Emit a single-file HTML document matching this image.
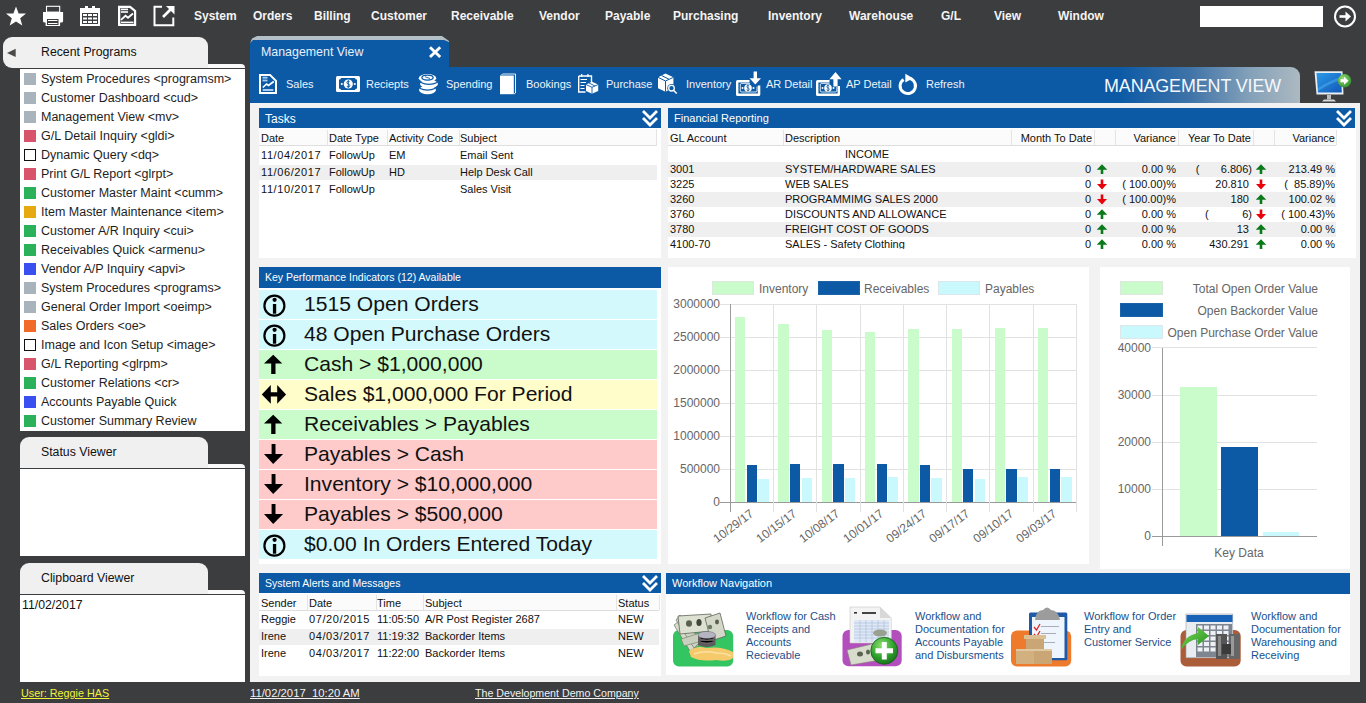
<!DOCTYPE html>
<html><head><meta charset="utf-8">
<style>
*{box-sizing:border-box}
html,body{margin:0;padding:0}
body{width:1366px;height:703px;overflow:hidden;background:#3c3d3f;position:relative;font-family:"Liberation Sans",sans-serif;color:#111}
.a{position:absolute}
.t{position:absolute;white-space:nowrap;line-height:1}
.menu{position:absolute;top:9px;color:#f4f4f4;font-weight:bold;font-size:12px;line-height:14px;white-space:nowrap}
.tab{position:absolute;background:#f0f0f0;border-radius:9px 9px 0 0}
.strip{position:absolute;background:#fafafa;border-radius:0 4px 0 0}
.dline{position:absolute;background:#3c3d3f;height:1px}
.wbox{position:absolute;background:#fff}
.li{position:absolute;left:41px;font-size:12.5px;line-height:14px;white-space:nowrap;color:#1e1e1e}
.sq{position:absolute;left:24px;width:12px;height:12px}
.hdr{position:absolute;background:#0c5aa6;height:20px;color:#fff;font-size:11px;line-height:20px;white-space:nowrap}
.tb{position:absolute;top:78px;color:#eef4fa;font-size:11px;line-height:12px;white-space:nowrap}
.cell{position:absolute;font-size:11px;line-height:13px;white-space:nowrap;color:#111}
.kr{position:absolute;left:259px;width:398px;height:30px}
.kt{position:absolute;left:304px;font-size:21.1px;line-height:24px;white-space:nowrap;color:#111}
.ax{position:absolute;font-size:12px;line-height:14px;color:#666;white-space:nowrap}
.wf{position:absolute;font-size:11px;line-height:13px;color:#1b4f8c;white-space:nowrap}
.ft{position:absolute;top:687px;font-size:10.8px;line-height:12px;white-space:nowrap;text-decoration:underline}
</style></head><body>

<!-- ===== TOP MENU ===== -->
<svg class="a" style="left:0;top:0" width="190" height="32" viewBox="0 0 190 32">
  <!-- star -->
  <polygon fill="#fff" points="16,6.5 18.6,13.4 26,13.6 20.2,18.3 22.3,25.6 16,21.4 9.7,25.6 11.8,18.3 6,13.6 13.4,13.4"/>
  <!-- printer -->
  <rect x="46.5" y="6.3" width="13.2" height="5.8" fill="none" stroke="#fff" stroke-width="1.1"/>
  <path d="M43,12 H63.1 V21 Q63.1,22.6 61.5,22.6 H44.6 Q43,22.6 43,21 Z" fill="#fff"/>
  <rect x="45.6" y="18.4" width="14.5" height="7.6" fill="#fff"/>
  <rect x="47" y="19" width="11.5" height="6" fill="#3c3d3f"/>
  <rect x="48" y="20" width="9.5" height="1" fill="#fff"/>
  <rect x="48" y="23" width="9.5" height="1" fill="#fff"/>
  <!-- calendar -->
  <rect x="80" y="8" width="20" height="18" fill="#fff"/>
  <rect x="85" y="6" width="3" height="2.5" fill="#fff"/><rect x="92" y="6" width="3" height="2.5" fill="#fff"/>
  <rect x="82" y="13" width="16" height="11" fill="#3c3d3f"/>
  <g fill="#fff">
  <rect x="83" y="14" width="4" height="2"/><rect x="88" y="14" width="4" height="2"/><rect x="93" y="14" width="4" height="2"/>
  <rect x="83" y="17.5" width="4" height="2"/><rect x="88" y="17.5" width="4" height="2"/><rect x="93" y="17.5" width="4" height="2"/>
  <rect x="83" y="21" width="4" height="2"/><rect x="88" y="21" width="4" height="2"/><rect x="93" y="21" width="4" height="2"/>
  </g>
  <!-- report -->
  <path d="M118,5.8 H130.5 L136.2,10.6 V26 H118 Z M120.3,8 V23.8 H134 V11.6 L129.7,8 Z" fill="#fff" fill-rule="evenodd"/>
  <rect x="121" y="8.6" width="7" height="1.6" fill="#fff"/><rect x="121" y="11.2" width="7" height="1.6" fill="#fff"/>
    <polyline points="121,19.8 125.5,15.8 128,17.8 133,13.5" fill="none" stroke="#fff" stroke-width="1.8"/>
  <rect x="121" y="21.6" width="12.5" height="1.4" fill="#fff"/>
  <!-- export -->
  <path d="M162,6.8 H154.5 V25.2 H173.3 V17.5" fill="none" stroke="#fff" stroke-width="2"/>
  <path d="M163,17 L171,9" stroke="#fff" stroke-width="2.6"/>
  <polygon points="166,6 174.5,6 174.5,14.5" fill="#fff"/>
</svg>
<div class="menu" style="left:194px">System</div>
<div class="menu" style="left:253px">Orders</div>
<div class="menu" style="left:314px">Billing</div>
<div class="menu" style="left:371px">Customer</div>
<div class="menu" style="left:451px">Receivable</div>
<div class="menu" style="left:539px">Vendor</div>
<div class="menu" style="left:605px">Payable</div>
<div class="menu" style="left:673px">Purchasing</div>
<div class="menu" style="left:768px">Inventory</div>
<div class="menu" style="left:849px">Warehouse</div>
<div class="menu" style="left:941px">G/L</div>
<div class="menu" style="left:994px">View</div>
<div class="menu" style="left:1058px">Window</div>
<div class="a" style="left:1200px;top:6px;width:123px;height:21px;background:#fff"></div>
<svg class="a" style="left:1332px;top:4px" width="26" height="26" viewBox="0 0 26 26">
  <circle cx="13" cy="12.5" r="10" fill="none" stroke="#fff" stroke-width="2"/>
  <path d="M7.5,12.5 H16" stroke="#fff" stroke-width="2.6"/>
  <polygon points="13.5,7.5 19,12.5 13.5,17.5" fill="#fff"/>
</svg>

<!-- ===== LEFT SIDEBAR ===== -->
<div class="tab" style="left:3px;top:37px;width:205px;height:31px;border-radius:9px 9px 0 9px"></div>
<svg class="a" style="left:6px;top:47px" width="12" height="12"><polygon points="1,6 9.7,1.8 9.7,10" fill="#4a4a4a"/></svg>
<div class="t" style="left:41px;top:45px;font-size:12.3px;line-height:14px">Recent Programs</div>
<div class="strip" style="left:208px;top:64px;width:37px;height:4px"></div>
<div class="dline" style="left:20px;top:68px;width:225px"></div>
<div class="wbox" style="left:20px;top:69px;width:225px;height:362px"></div>

<div id="list"><div class="sq" style="top:73px;background:#a8b3bc"></div>
<div class="li" style="top:72px">System Procedures &lt;programsm&gt;</div>
<div class="sq" style="top:92px;background:#a8b3bc"></div>
<div class="li" style="top:91px">Customer Dashboard &lt;cud&gt;</div>
<div class="sq" style="top:111px;background:#a8b3bc"></div>
<div class="li" style="top:110px">Management View &lt;mv&gt;</div>
<div class="sq" style="top:130px;background:#d8546c"></div>
<div class="li" style="top:129px">G/L Detail Inquiry &lt;gldi&gt;</div>
<div class="sq" style="top:149px;border:1.5px solid #111;background:#fff"></div>
<div class="li" style="top:148px">Dynamic Query &lt;dq&gt;</div>
<div class="sq" style="top:168px;background:#d8546c"></div>
<div class="li" style="top:167px">Print G/L Report &lt;glrpt&gt;</div>
<div class="sq" style="top:187px;background:#2bb15a"></div>
<div class="li" style="top:186px">Customer Master Maint &lt;cumm&gt;</div>
<div class="sq" style="top:206px;background:#e6a910"></div>
<div class="li" style="top:205px">Item Master Maintenance &lt;item&gt;</div>
<div class="sq" style="top:225px;background:#2bb15a"></div>
<div class="li" style="top:224px">Customer A/R Inquiry &lt;cui&gt;</div>
<div class="sq" style="top:244px;background:#2bb15a"></div>
<div class="li" style="top:243px">Receivables Quick &lt;armenu&gt;</div>
<div class="sq" style="top:263px;background:#3a4ff0"></div>
<div class="li" style="top:262px">Vendor A/P Inquiry &lt;apvi&gt;</div>
<div class="sq" style="top:282px;background:#a8b3bc"></div>
<div class="li" style="top:281px">System Procedures &lt;programs&gt;</div>
<div class="sq" style="top:301px;background:#a8b3bc"></div>
<div class="li" style="top:300px">General Order Import &lt;oeimp&gt;</div>
<div class="sq" style="top:320px;background:#f16a27"></div>
<div class="li" style="top:319px">Sales Orders &lt;oe&gt;</div>
<div class="sq" style="top:339px;border:1.5px solid #111;background:#fff"></div>
<div class="li" style="top:338px">Image and Icon Setup &lt;image&gt;</div>
<div class="sq" style="top:358px;background:#d8546c"></div>
<div class="li" style="top:357px">G/L Reporting &lt;glrpm&gt;</div>
<div class="sq" style="top:377px;background:#2bb15a"></div>
<div class="li" style="top:376px">Customer Relations &lt;cr&gt;</div>
<div class="sq" style="top:396px;background:#3a4ff0"></div>
<div class="li" style="top:395px">Accounts Payable Quick</div>
<div class="sq" style="top:415px;background:#2bb15a"></div>
<div class="li" style="top:414px">Customer Summary Review</div></div><!--/list-->

<div class="tab" style="left:20px;top:437px;width:188px;height:31px"></div>
<div class="t" style="left:41px;top:445px;font-size:12.3px;line-height:14px">Status Viewer</div>
<div class="strip" style="left:208px;top:464px;width:37px;height:4px"></div>
<div class="dline" style="left:20px;top:468px;width:225px"></div>
<div class="wbox" style="left:20px;top:469px;width:225px;height:87px"></div>

<div class="tab" style="left:20px;top:563px;width:188px;height:31px"></div>
<div class="t" style="left:41px;top:571px;font-size:12.3px;line-height:14px">Clipboard Viewer</div>
<div class="strip" style="left:208px;top:590px;width:37px;height:4px"></div>
<div class="dline" style="left:20px;top:594px;width:225px"></div>
<div class="wbox" style="left:20px;top:595px;width:225px;height:87px"></div>
<div class="t" style="left:22px;top:598px;font-size:12.3px;line-height:14px">11/02/2017</div>

<div class="ft" style="left:21px;color:#f2f23a">User: Reggie HAS</div>
<div class="ft" style="left:250px;color:#f2f2f2;font-size:11.3px">11/02/2017&nbsp; 10:20 AM</div>
<div class="ft" style="left:475px;color:#f2f2f2;font-size:10.65px">The Development Demo Company</div>

<!-- MAIN -->
<div id="main"><!-- tab -->
<div class="a" style="left:250px;top:36px;width:199px;height:34px;background:#b4c0c8;clip-path:polygon(0 7px,2px 2.5px,7px 0,192px 0,199px 5px,199px 100%,0 100%);border-radius:7px 0 0 0"></div>
<div class="a" style="left:250px;top:40px;width:199px;height:30px;background:#0c5aa6;clip-path:polygon(0 3px,3px 0,194px 0,199px 2px,199px 100%,0 100%)"></div>
<div class="t" style="left:261px;top:45px;font-size:12.4px;line-height:14px;color:#e6f0fa">Management View</div>
<svg class="a" style="left:427px;top:44px" width="16" height="16" viewBox="0 0 16 16"><path d="M3,3.3 L13.2,13 M13.2,3.3 L3,13" stroke="#fff" stroke-width="2.9"/></svg>
<!-- toolbar -->
<div class="a" style="left:250px;top:67px;width:1050px;height:36px;border-radius:0 9px 0 0;background:linear-gradient(to right,#0c5aa6 0px,#0c5aa6 870px,#3f73a8 940px,#84a1b9 1000px,#acb9c1 1050px)"></div>
<div class="t" style="left:1104px;top:76px;font-size:17.9px;letter-spacing:-0.1px;line-height:20px;color:#f4f8fc">MANAGEMENT VIEW</div>
<!-- content bg -->
<div class="a" style="left:250px;top:103px;width:1110px;height:579px;background:#f2f2f2"></div>

<!-- Tasks -->
<div class="hdr" style="left:259px;top:108px;width:402px"><span style="position:absolute;left:6px;top:1px;font-size:12px;letter-spacing:0px">Tasks</span></div>
<div class="wbox" style="left:259px;top:128px;width:402px;height:130px"></div>
<!-- Financial -->
<div class="hdr" style="left:668px;top:108px;width:687px"><span style="position:absolute;left:6px;top:0">Financial Reporting</span></div>
<div class="wbox" style="left:668px;top:128px;width:688px;height:130px"></div>
<!-- KPI -->
<div class="hdr" style="left:259px;top:267px;width:402px;height:21px;line-height:21px"><span style="position:absolute;left:6px;top:0;font-size:10.5px">Key Performance Indicators (12) Available</span></div>
<div class="wbox" style="left:259px;top:288px;width:402px;height:276px"></div>
<!-- charts -->
<div class="wbox" style="left:668px;top:267px;width:421px;height:297px"></div>
<div class="wbox" style="left:1100px;top:267px;width:250px;height:302px"></div>
<!-- alerts -->
<div class="hdr" style="left:259px;top:573px;width:402px"><span style="position:absolute;left:6px;top:0;font-size:10.5px">System Alerts and Messages</span></div>
<div class="wbox" style="left:259px;top:593px;width:402px;height:83px"></div>
<!-- workflow -->
<div class="hdr" style="left:666px;top:573px;width:684px;height:21px;line-height:21px"><span style="position:absolute;left:6px;top:0">Workflow Navigation</span></div>
<div class="wbox" style="left:666px;top:594px;width:684px;height:81px"></div>
</div><!--/main-->
<div id="tables"><div class="a" style="left:259px;top:129px;width:398px;height:17px;background:#fbfbfb;border-bottom:1px solid #dedede"></div>
<div class="a" style="left:327px;top:130px;width:1px;height:15px;background:#e4e4e4"></div>
<div class="a" style="left:387px;top:130px;width:1px;height:15px;background:#e4e4e4"></div>
<div class="a" style="left:459px;top:130px;width:1px;height:15px;background:#e4e4e4"></div>
<div class="a" style="left:656px;top:129px;width:1px;height:17px;background:#e4e4e4"></div>
<div class="cell" style="left:261px;top:131.5px;font-size:11px;color:#111;">Date</div>
<div class="cell" style="left:329px;top:131.5px;font-size:11px;color:#111;">Date Type</div>
<div class="cell" style="left:389px;top:131.5px;font-size:11px;color:#111;">Activity Code</div>
<div class="cell" style="left:460px;top:131.5px;font-size:11px;color:#111;">Subject</div>
<div class="a" style="left:259px;top:165px;width:398px;height:15px;background:#efefef"></div>
<div class="cell" style="left:261px;top:148.5px;font-size:11px;color:#111;letter-spacing:0.6px">11/04/2017</div>
<div class="cell" style="left:329px;top:148.5px;font-size:11px;color:#111;">FollowUp</div>
<div class="cell" style="left:389px;top:148.5px;font-size:11px;color:#111;">EM</div>
<div class="cell" style="left:460px;top:148.5px;font-size:11px;color:#111;">Email Sent</div>
<div class="cell" style="left:261px;top:165.5px;font-size:11px;color:#111;letter-spacing:0.6px">11/06/2017</div>
<div class="cell" style="left:329px;top:165.5px;font-size:11px;color:#111;">FollowUp</div>
<div class="cell" style="left:389px;top:165.5px;font-size:11px;color:#111;">HD</div>
<div class="cell" style="left:460px;top:165.5px;font-size:11px;color:#111;">Help Desk Call</div>
<div class="cell" style="left:261px;top:182.5px;font-size:11px;color:#111;letter-spacing:0.6px">11/10/2017</div>
<div class="cell" style="left:329px;top:182.5px;font-size:11px;color:#111;">FollowUp</div>
<div class="cell" style="left:460px;top:182.5px;font-size:11px;color:#111;">Sales Visit</div>
<div class="a" style="left:668px;top:129px;width:668px;height:17px;background:#fbfbfb;border-bottom:1px solid #dedede"></div>
<div class="a" style="left:783px;top:130px;width:1px;height:15px;background:#e4e4e4"></div>
<div class="a" style="left:1011px;top:130px;width:1px;height:15px;background:#e4e4e4"></div>
<div class="a" style="left:1094px;top:130px;width:1px;height:15px;background:#e4e4e4"></div>
<div class="a" style="left:1115px;top:130px;width:1px;height:15px;background:#e4e4e4"></div>
<div class="a" style="left:1178px;top:130px;width:1px;height:15px;background:#e4e4e4"></div>
<div class="a" style="left:1253px;top:130px;width:1px;height:15px;background:#e4e4e4"></div>
<div class="a" style="left:1274px;top:130px;width:1px;height:15px;background:#e4e4e4"></div>
<div class="a" style="left:1336px;top:130px;width:1px;height:15px;background:#e4e4e4"></div>
<div class="cell" style="left:670px;top:131.5px;font-size:11px;color:#111;">GL Account</div>
<div class="cell" style="left:785px;top:131.5px;font-size:11px;color:#111;">Description</div>
<div class="cell" style="left:892px;width:200px;text-align:right;top:131.5px;font-size:11px;color:#111;">Month To Date</div>
<div class="cell" style="left:976px;width:200px;text-align:right;top:131.5px;font-size:11px;color:#111;">Variance</div>
<div class="cell" style="left:1051px;width:200px;text-align:right;top:131.5px;font-size:11px;color:#111;">Year To Date</div>
<div class="cell" style="left:1135px;width:200px;text-align:right;top:131.5px;font-size:11px;color:#111;">Variance</div>
<div class="a" style="left:668px;top:162px;width:668px;height:15px;background:#efefef"></div>
<div class="a" style="left:668px;top:192px;width:668px;height:15px;background:#efefef"></div>
<div class="a" style="left:668px;top:222px;width:668px;height:15px;background:#efefef"></div>
<div class="cell" style="left:845px;top:148.2px;font-size:11px;color:#111;">INCOME</div>
<div class="cell" style="left:670px;top:163.2px;font-size:11px;color:#111;">3001</div>
<div class="cell" style="left:785px;top:163.2px;font-size:11px;color:#111;">SYSTEM/HARDWARE SALES</div>
<div class="cell" style="left:891px;width:200px;text-align:right;top:163.2px;font-size:11px;color:#111;">0</div>
<div class="a" style="left:1096px;top:164px;width:12px;height:11px;line-height:0"><svg width="12" height="11" viewBox="0 0 12 11"><path d="M6,0.3 L11.3,5.8 H7.3 V10 H4.7 V5.8 H0.7 Z" fill="#0b7a1b"/></svg></div>
<div class="cell" style="left:976px;width:200px;text-align:right;top:163.2px;font-size:11px;color:#111;">0.00 %</div>
<div class="cell" style="left:1052px;width:200px;text-align:right;top:163.2px;font-size:11px;color:#111;">(&nbsp;&nbsp;&nbsp;&nbsp;&nbsp;&nbsp; 6.806)</div>
<div class="a" style="left:1255px;top:164px;width:12px;height:11px;line-height:0"><svg width="12" height="11" viewBox="0 0 12 11"><path d="M6,0.3 L11.3,5.8 H7.3 V10 H4.7 V5.8 H0.7 Z" fill="#0b7a1b"/></svg></div>
<div class="cell" style="left:1135px;width:200px;text-align:right;top:163.2px;font-size:11px;color:#111;">213.49 %</div>
<div class="cell" style="left:670px;top:178.2px;font-size:11px;color:#111;">3225</div>
<div class="cell" style="left:785px;top:178.2px;font-size:11px;color:#111;">WEB SALES</div>
<div class="cell" style="left:891px;width:200px;text-align:right;top:178.2px;font-size:11px;color:#111;">0</div>
<div class="a" style="left:1096px;top:179px;width:12px;height:11px;line-height:0"><svg width="12" height="11" viewBox="0 0 12 11"><path d="M6,10.5 L11,5 H7.3 V0.5 H4.7 V5 H1 Z" fill="#e8000b"/></svg></div>
<div class="cell" style="left:976px;width:200px;text-align:right;top:178.2px;font-size:11px;color:#111;">( 100.00)%</div>
<div class="cell" style="left:1052px;width:200px;text-align:right;top:178.2px;font-size:11px;color:#111;">20.810&nbsp;</div>
<div class="a" style="left:1255px;top:179px;width:12px;height:11px;line-height:0"><svg width="12" height="11" viewBox="0 0 12 11"><path d="M6,10.5 L11,5 H7.3 V0.5 H4.7 V5 H1 Z" fill="#e8000b"/></svg></div>
<div class="cell" style="left:1135px;width:200px;text-align:right;top:178.2px;font-size:11px;color:#111;">(&nbsp; 85.89)%</div>
<div class="cell" style="left:670px;top:193.2px;font-size:11px;color:#111;">3260</div>
<div class="cell" style="left:785px;top:193.2px;font-size:11px;color:#111;">PROGRAMMIMG SALES 2000</div>
<div class="cell" style="left:891px;width:200px;text-align:right;top:193.2px;font-size:11px;color:#111;">0</div>
<div class="a" style="left:1096px;top:194px;width:12px;height:11px;line-height:0"><svg width="12" height="11" viewBox="0 0 12 11"><path d="M6,10.5 L11,5 H7.3 V0.5 H4.7 V5 H1 Z" fill="#e8000b"/></svg></div>
<div class="cell" style="left:976px;width:200px;text-align:right;top:193.2px;font-size:11px;color:#111;">( 100.00)%</div>
<div class="cell" style="left:1052px;width:200px;text-align:right;top:193.2px;font-size:11px;color:#111;">180&nbsp;</div>
<div class="a" style="left:1255px;top:194px;width:12px;height:11px;line-height:0"><svg width="12" height="11" viewBox="0 0 12 11"><path d="M6,0.3 L11.3,5.8 H7.3 V10 H4.7 V5.8 H0.7 Z" fill="#0b7a1b"/></svg></div>
<div class="cell" style="left:1135px;width:200px;text-align:right;top:193.2px;font-size:11px;color:#111;">100.02 %</div>
<div class="cell" style="left:670px;top:208.2px;font-size:11px;color:#111;">3760</div>
<div class="cell" style="left:785px;top:208.2px;font-size:11px;color:#111;">DISCOUNTS AND ALLOWANCE</div>
<div class="cell" style="left:891px;width:200px;text-align:right;top:208.2px;font-size:11px;color:#111;">0</div>
<div class="a" style="left:1096px;top:209px;width:12px;height:11px;line-height:0"><svg width="12" height="11" viewBox="0 0 12 11"><path d="M6,0.3 L11.3,5.8 H7.3 V10 H4.7 V5.8 H0.7 Z" fill="#0b7a1b"/></svg></div>
<div class="cell" style="left:976px;width:200px;text-align:right;top:208.2px;font-size:11px;color:#111;">0.00 %</div>
<div class="cell" style="left:1052px;width:200px;text-align:right;top:208.2px;font-size:11px;color:#111;">(&nbsp;&nbsp;&nbsp;&nbsp;&nbsp;&nbsp;&nbsp;&nbsp;&nbsp;&nbsp; 6)</div>
<div class="a" style="left:1255px;top:209px;width:12px;height:11px;line-height:0"><svg width="12" height="11" viewBox="0 0 12 11"><path d="M6,10.5 L11,5 H7.3 V0.5 H4.7 V5 H1 Z" fill="#e8000b"/></svg></div>
<div class="cell" style="left:1135px;width:200px;text-align:right;top:208.2px;font-size:11px;color:#111;">( 100.43)%</div>
<div class="cell" style="left:670px;top:223.2px;font-size:11px;color:#111;">3780</div>
<div class="cell" style="left:785px;top:223.2px;font-size:11px;color:#111;">FREIGHT COST OF GOODS</div>
<div class="cell" style="left:891px;width:200px;text-align:right;top:223.2px;font-size:11px;color:#111;">0</div>
<div class="a" style="left:1096px;top:224px;width:12px;height:11px;line-height:0"><svg width="12" height="11" viewBox="0 0 12 11"><path d="M6,0.3 L11.3,5.8 H7.3 V10 H4.7 V5.8 H0.7 Z" fill="#0b7a1b"/></svg></div>
<div class="cell" style="left:976px;width:200px;text-align:right;top:223.2px;font-size:11px;color:#111;">0.00 %</div>
<div class="cell" style="left:1052px;width:200px;text-align:right;top:223.2px;font-size:11px;color:#111;">13&nbsp;</div>
<div class="a" style="left:1255px;top:224px;width:12px;height:11px;line-height:0"><svg width="12" height="11" viewBox="0 0 12 11"><path d="M6,0.3 L11.3,5.8 H7.3 V10 H4.7 V5.8 H0.7 Z" fill="#0b7a1b"/></svg></div>
<div class="cell" style="left:1135px;width:200px;text-align:right;top:223.2px;font-size:11px;color:#111;">0.00 %</div>
<div class="cell" style="left:670px;top:238.2px;font-size:11px;color:#111;">4100-70</div>
<div class="cell" style="left:785px;top:238.2px;font-size:11px;color:#111;">SALES - Safety Clothing</div>
<div class="cell" style="left:891px;width:200px;text-align:right;top:238.2px;font-size:11px;color:#111;">0</div>
<div class="a" style="left:1096px;top:239px;width:12px;height:11px;line-height:0"><svg width="12" height="11" viewBox="0 0 12 11"><path d="M6,0.3 L11.3,5.8 H7.3 V10 H4.7 V5.8 H0.7 Z" fill="#0b7a1b"/></svg></div>
<div class="cell" style="left:976px;width:200px;text-align:right;top:238.2px;font-size:11px;color:#111;">0.00 %</div>
<div class="cell" style="left:1052px;width:200px;text-align:right;top:238.2px;font-size:11px;color:#111;">430.291&nbsp;</div>
<div class="a" style="left:1255px;top:239px;width:12px;height:11px;line-height:0"><svg width="12" height="11" viewBox="0 0 12 11"><path d="M6,0.3 L11.3,5.8 H7.3 V10 H4.7 V5.8 H0.7 Z" fill="#0b7a1b"/></svg></div>
<div class="cell" style="left:1135px;width:200px;text-align:right;top:238.2px;font-size:11px;color:#111;">0.00 %</div>
<div class="a" style="left:668px;top:249px;width:688px;height:9px;background:#fff"></div>
<div class="a" style="left:259px;top:594px;width:400px;height:17px;background:#fbfbfb;border-bottom:1px solid #dedede"></div>
<div class="a" style="left:307px;top:595px;width:1px;height:15px;background:#e4e4e4"></div>
<div class="a" style="left:376px;top:595px;width:1px;height:15px;background:#e4e4e4"></div>
<div class="a" style="left:423px;top:595px;width:1px;height:15px;background:#e4e4e4"></div>
<div class="a" style="left:616px;top:595px;width:1px;height:15px;background:#e4e4e4"></div>
<div class="a" style="left:659px;top:595px;width:1px;height:15px;background:#e4e4e4"></div>
<div class="cell" style="left:261px;top:597.2px;font-size:11px;color:#111;">Sender</div>
<div class="cell" style="left:309px;top:597.2px;font-size:11px;color:#111;">Date</div>
<div class="cell" style="left:377px;top:597.2px;font-size:11px;color:#111;">Time</div>
<div class="cell" style="left:425px;top:597.2px;font-size:11px;color:#111;">Subject</div>
<div class="cell" style="left:618px;top:597.2px;font-size:11px;color:#111;">Status</div>
<div class="a" style="left:259px;top:629px;width:400px;height:16px;background:#efefef"></div>
<div class="cell" style="left:261px;top:613.2px;font-size:11px;color:#111;">Reggie</div>
<div class="cell" style="left:309px;top:613.2px;font-size:11px;color:#111;letter-spacing:0.6px">07/20/2015</div>
<div class="cell" style="left:377px;top:613.2px;font-size:11px;color:#111;">11:05:50</div>
<div class="cell" style="left:425px;top:613.2px;font-size:11px;color:#111;">A/R Post Register 2687</div>
<div class="cell" style="left:618px;top:613.2px;font-size:11px;color:#111;">NEW</div>
<div class="cell" style="left:261px;top:630.2px;font-size:11px;color:#111;">Irene</div>
<div class="cell" style="left:309px;top:630.2px;font-size:11px;color:#111;letter-spacing:0.6px">04/03/2017</div>
<div class="cell" style="left:377px;top:630.2px;font-size:11px;color:#111;">11:19:32</div>
<div class="cell" style="left:425px;top:630.2px;font-size:11px;color:#111;">Backorder Items</div>
<div class="cell" style="left:618px;top:630.2px;font-size:11px;color:#111;">NEW</div>
<div class="cell" style="left:261px;top:647.2px;font-size:11px;color:#111;">Irene</div>
<div class="cell" style="left:309px;top:647.2px;font-size:11px;color:#111;letter-spacing:0.6px">04/03/2017</div>
<div class="cell" style="left:377px;top:647.2px;font-size:11px;color:#111;">11:22:00</div>
<div class="cell" style="left:425px;top:647.2px;font-size:11px;color:#111;">Backorder Items</div>
<div class="cell" style="left:618px;top:647.2px;font-size:11px;color:#111;">NEW</div></div><!--/tables-->
<div id="kpi"><div class="kr" style="top:290px;height:29px;background:#d3f9fd"></div>
<div class="a" style="left:259px;top:290px;width:30px;height:29px;line-height:0"><svg width="30" height="29" viewBox="0 0 30 29"><circle cx="15.4" cy="15.7" r="10" fill="none" stroke="#000" stroke-width="2.2"/><circle cx="15.6" cy="9.8" r="2.1" fill="#000"/><rect x="13.9" y="14" width="3.3" height="9.7" fill="#000"/></svg></div>
<div class="kt" style="top:292px">1515 Open Orders</div>
<div class="kr" style="top:320px;height:29px;background:#d3f9fd"></div>
<div class="a" style="left:259px;top:320px;width:30px;height:29px;line-height:0"><svg width="30" height="29" viewBox="0 0 30 29"><circle cx="15.4" cy="15.7" r="10" fill="none" stroke="#000" stroke-width="2.2"/><circle cx="15.6" cy="9.8" r="2.1" fill="#000"/><rect x="13.9" y="14" width="3.3" height="9.7" fill="#000"/></svg></div>
<div class="kt" style="top:322px">48 Open Purchase Orders</div>
<div class="kr" style="top:350px;height:29px;background:#c9fcca"></div>
<div class="a" style="left:259px;top:350px;width:30px;height:29px;line-height:0"><svg width="30" height="29" viewBox="0 0 30 29"><path d="M14.2,4.7 L23.3,13.6 H16.5 V23.9 H12.2 V13.6 H5 Z" fill="#000"/></svg></div>
<div class="kt" style="top:352px">Cash &gt; $1,000,000</div>
<div class="kr" style="top:380px;height:29px;background:#fffdca"></div>
<div class="a" style="left:259px;top:380px;width:30px;height:29px;line-height:0"><svg width="30" height="29" viewBox="0 0 30 29"><path d="M2.8,14.4 L11.8,5 V12.2 H18.2 V5 L27.1,14.4 L18.2,23.7 V16.5 H11.8 V23.7 Z" fill="#000"/></svg></div>
<div class="kt" style="top:382px">Sales $1,000,000 For Period</div>
<div class="kr" style="top:410px;height:29px;background:#c9fcca"></div>
<div class="a" style="left:259px;top:410px;width:30px;height:29px;line-height:0"><svg width="30" height="29" viewBox="0 0 30 29"><path d="M14.2,4.7 L23.3,13.6 H16.5 V23.9 H12.2 V13.6 H5 Z" fill="#000"/></svg></div>
<div class="kt" style="top:412px">Receivables &gt; Payables</div>
<div class="kr" style="top:440px;height:29px;background:#fecaca"></div>
<div class="a" style="left:259px;top:440px;width:30px;height:29px;line-height:0"><svg width="30" height="29" viewBox="0 0 30 29"><path d="M14.2,23.9 L24.1,14.1 H16.5 V4.1 H12.6 V14.1 H5 Z" fill="#000"/></svg></div>
<div class="kt" style="top:442px">Payables &gt; Cash</div>
<div class="kr" style="top:470px;height:29px;background:#fecaca"></div>
<div class="a" style="left:259px;top:470px;width:30px;height:29px;line-height:0"><svg width="30" height="29" viewBox="0 0 30 29"><path d="M14.2,23.9 L24.1,14.1 H16.5 V4.1 H12.6 V14.1 H5 Z" fill="#000"/></svg></div>
<div class="kt" style="top:472px">Inventory &gt; $10,000,000</div>
<div class="kr" style="top:500px;height:29px;background:#fecaca"></div>
<div class="a" style="left:259px;top:500px;width:30px;height:29px;line-height:0"><svg width="30" height="29" viewBox="0 0 30 29"><path d="M14.2,23.9 L24.1,14.1 H16.5 V4.1 H12.6 V14.1 H5 Z" fill="#000"/></svg></div>
<div class="kt" style="top:502px">Payables &gt; $500,000</div>
<div class="kr" style="top:530px;height:29px;background:#d3f9fd"></div>
<div class="a" style="left:259px;top:530px;width:30px;height:29px;line-height:0"><svg width="30" height="29" viewBox="0 0 30 29"><circle cx="15.4" cy="15.7" r="10" fill="none" stroke="#000" stroke-width="2.2"/><circle cx="15.6" cy="9.8" r="2.1" fill="#000"/><rect x="13.9" y="14" width="3.3" height="9.7" fill="#000"/></svg></div>
<div class="kt" style="top:532px">$0.00 In Orders Entered Today</div>
<div class="a" style="left:712px;top:281px;width:42px;height:14px;background:#c9fcca;border:1px solid #dde8dd"></div>
<div class="ax" style="left:759px;top:282px">Inventory</div>
<div class="a" style="left:818px;top:281px;width:42px;height:14px;background:#0c5aa6;border:1px solid #1d63a8"></div>
<div class="ax" style="left:864px;top:282px">Receivables</div>
<div class="a" style="left:938px;top:281px;width:42px;height:14px;background:#c9f9fd;border:1px solid #dde6e8"></div>
<div class="ax" style="left:985px;top:282px">Payables</div>
<div class="a" style="left:720px;top:303.8px;width:357px;height:1px;background:#e2e2e2"></div>
<div class="ax" style="left:520px;width:200px;text-align:right;top:297.3px">3000000</div>
<div class="a" style="left:720px;top:336.8px;width:357px;height:1px;background:#e2e2e2"></div>
<div class="ax" style="left:520px;width:200px;text-align:right;top:330.3px">2500000</div>
<div class="a" style="left:720px;top:369.7px;width:357px;height:1px;background:#e2e2e2"></div>
<div class="ax" style="left:520px;width:200px;text-align:right;top:363.2px">2000000</div>
<div class="a" style="left:720px;top:402.7px;width:357px;height:1px;background:#e2e2e2"></div>
<div class="ax" style="left:520px;width:200px;text-align:right;top:396.2px">1500000</div>
<div class="a" style="left:720px;top:435.7px;width:357px;height:1px;background:#e2e2e2"></div>
<div class="ax" style="left:520px;width:200px;text-align:right;top:429.2px">1000000</div>
<div class="a" style="left:720px;top:468.6px;width:357px;height:1px;background:#e2e2e2"></div>
<div class="ax" style="left:520px;width:200px;text-align:right;top:462.1px">500000</div>
<div class="a" style="left:720px;top:501.6px;width:357px;height:1px;background:#9a9a9a"></div>
<div class="ax" style="left:520px;width:200px;text-align:right;top:495.1px">0</div>
<div class="a" style="left:729.7px;top:304px;width:1px;height:208px;background:#9a9a9a"></div>
<div class="a" style="left:773.0px;top:304px;width:1px;height:208px;background:#e2e2e2"></div>
<div class="a" style="left:816.3px;top:304px;width:1px;height:208px;background:#e2e2e2"></div>
<div class="a" style="left:859.6px;top:304px;width:1px;height:208px;background:#e2e2e2"></div>
<div class="a" style="left:902.9px;top:304px;width:1px;height:208px;background:#e2e2e2"></div>
<div class="a" style="left:946.2px;top:304px;width:1px;height:208px;background:#e2e2e2"></div>
<div class="a" style="left:989.4px;top:304px;width:1px;height:208px;background:#e2e2e2"></div>
<div class="a" style="left:1032.7px;top:304px;width:1px;height:208px;background:#e2e2e2"></div>
<div class="a" style="left:1076.0px;top:304px;width:1px;height:208px;background:#e2e2e2"></div>
<div class="a" style="left:735.1px;top:317.0px;width:10.4px;height:185.1px;background:#c9fcca"></div>
<div class="a" style="left:746.6px;top:465.1px;width:10.4px;height:37.0px;background:#0c5aa6"></div>
<div class="a" style="left:758.2px;top:478.9px;width:10.4px;height:23.2px;background:#c9f9fd"></div>
<div class="ax" style="left:651.8px;top:505px;width:100px;text-align:right;transform-origin:100% 50%;transform:rotate(-37deg)">10/29/17</div>
<div class="a" style="left:778.4px;top:323.8px;width:10.4px;height:178.3px;background:#c9fcca"></div>
<div class="a" style="left:789.9px;top:463.8px;width:10.4px;height:38.3px;background:#0c5aa6"></div>
<div class="a" style="left:801.5px;top:478.0px;width:10.4px;height:24.1px;background:#c9f9fd"></div>
<div class="ax" style="left:695.1px;top:505px;width:100px;text-align:right;transform-origin:100% 50%;transform:rotate(-37deg)">10/15/17</div>
<div class="a" style="left:821.7px;top:329.9px;width:10.4px;height:172.2px;background:#c9fcca"></div>
<div class="a" style="left:833.2px;top:463.8px;width:10.4px;height:38.3px;background:#0c5aa6"></div>
<div class="a" style="left:844.8px;top:478.0px;width:10.4px;height:24.1px;background:#c9f9fd"></div>
<div class="ax" style="left:738.4px;top:505px;width:100px;text-align:right;transform-origin:100% 50%;transform:rotate(-37deg)">10/08/17</div>
<div class="a" style="left:865.0px;top:331.8px;width:10.4px;height:170.3px;background:#c9fcca"></div>
<div class="a" style="left:876.5px;top:463.8px;width:10.4px;height:38.3px;background:#0c5aa6"></div>
<div class="a" style="left:888.1px;top:477.0px;width:10.4px;height:25.1px;background:#c9f9fd"></div>
<div class="ax" style="left:781.7px;top:505px;width:100px;text-align:right;transform-origin:100% 50%;transform:rotate(-37deg)">10/01/17</div>
<div class="a" style="left:908.3px;top:328.6px;width:10.4px;height:173.5px;background:#c9fcca"></div>
<div class="a" style="left:919.8px;top:465.1px;width:10.4px;height:37.0px;background:#0c5aa6"></div>
<div class="a" style="left:931.3px;top:478.0px;width:10.4px;height:24.1px;background:#c9f9fd"></div>
<div class="ax" style="left:825.0px;top:505px;width:100px;text-align:right;transform-origin:100% 50%;transform:rotate(-37deg)">09/24/17</div>
<div class="a" style="left:951.6px;top:328.6px;width:10.4px;height:173.5px;background:#c9fcca"></div>
<div class="a" style="left:963.1px;top:469.0px;width:10.4px;height:33.1px;background:#0c5aa6"></div>
<div class="a" style="left:974.6px;top:478.9px;width:10.4px;height:23.2px;background:#c9f9fd"></div>
<div class="ax" style="left:868.3px;top:505px;width:100px;text-align:right;transform-origin:100% 50%;transform:rotate(-37deg)">09/17/17</div>
<div class="a" style="left:994.8px;top:327.6px;width:10.4px;height:174.5px;background:#c9fcca"></div>
<div class="a" style="left:1006.4px;top:469.0px;width:10.4px;height:33.1px;background:#0c5aa6"></div>
<div class="a" style="left:1017.9px;top:477.0px;width:10.4px;height:25.1px;background:#c9f9fd"></div>
<div class="ax" style="left:911.6px;top:505px;width:100px;text-align:right;transform-origin:100% 50%;transform:rotate(-37deg)">09/10/17</div>
<div class="a" style="left:1038.1px;top:327.6px;width:10.4px;height:174.5px;background:#c9fcca"></div>
<div class="a" style="left:1049.7px;top:469.0px;width:10.4px;height:33.1px;background:#0c5aa6"></div>
<div class="a" style="left:1061.2px;top:477.0px;width:10.4px;height:25.1px;background:#c9f9fd"></div>
<div class="ax" style="left:954.9px;top:505px;width:100px;text-align:right;transform-origin:100% 50%;transform:rotate(-37deg)">09/03/17</div>
<div class="a" style="left:1120px;top:281px;width:43px;height:14px;background:#c9fcca;border:1px solid #dde8dd"></div>
<div class="ax" style="left:1118px;width:200px;text-align:right;top:282px">Total Open Order Value</div>
<div class="a" style="left:1120px;top:303px;width:43px;height:14px;background:#0c5aa6;border:1px solid #1d63a8"></div>
<div class="ax" style="left:1118px;width:200px;text-align:right;top:304px">Open Backorder Value</div>
<div class="a" style="left:1120px;top:325px;width:43px;height:14px;background:#c9f9fd;border:1px solid #dde6e8"></div>
<div class="ax" style="left:1118px;width:200px;text-align:right;top:326px">Open Purchase Order Value</div>
<div class="a" style="left:1152px;top:347.4px;width:165px;height:1px;background:#e2e2e2"></div>
<div class="ax" style="left:951px;width:200px;text-align:right;top:340.9px">40000</div>
<div class="a" style="left:1152px;top:394.5px;width:165px;height:1px;background:#e2e2e2"></div>
<div class="ax" style="left:951px;width:200px;text-align:right;top:388.0px">30000</div>
<div class="a" style="left:1152px;top:441.6px;width:165px;height:1px;background:#e2e2e2"></div>
<div class="ax" style="left:951px;width:200px;text-align:right;top:435.1px">20000</div>
<div class="a" style="left:1152px;top:488.8px;width:165px;height:1px;background:#e2e2e2"></div>
<div class="ax" style="left:951px;width:200px;text-align:right;top:482.3px">10000</div>
<div class="a" style="left:1152px;top:535.9px;width:165px;height:1px;background:#9a9a9a"></div>
<div class="ax" style="left:951px;width:200px;text-align:right;top:529.4px">0</div>
<div class="a" style="left:1162px;top:348px;width:1px;height:198px;background:#9a9a9a"></div>
<div class="a" style="left:1179.7px;top:386.6px;width:36.9px;height:149.8px;background:#c9fcca"></div>
<div class="a" style="left:1221.2px;top:446.7px;width:36.8px;height:89.7px;background:#0c5aa6"></div>
<div class="a" style="left:1262.6px;top:531.9px;width:36.9px;height:4.5px;background:#c9f9fd"></div>
<div class="ax" style="left:1139px;width:200px;text-align:center;top:546px">Key Data</div></div><!--/kpi-->
<div id="toolbar"><svg class="a" style="left:250px;top:67px" width="700" height="36" viewBox="250 67 700 36">
 <g fill="#fff">
  <!-- Sales report -->
  <path d="M259,74 H270.5 L277,80.5 V94 H259 Z M261,76 V92 H275 V81.3 L269.7,76 Z" fill-rule="evenodd"/>
  <rect x="262.5" y="76.8" width="5" height="1.8" fill="#a9cdf0"/><rect x="262.5" y="79.6" width="5" height="1.8" fill="#a9cdf0"/>
  <polyline points="262.8,87.5 266.5,84 268.5,85.5 273.8,81.5" fill="none" stroke="#fff" stroke-width="1.7"/>
  <rect x="262.8" y="89" width="10.5" height="2" fill="#a9cdf0"/>
  <!-- Receipts bill -->
  <rect x="336" y="76" width="24" height="16" rx="1.5"/>
  <path d="M339,79.5 Q341,79.5 341,78 H355 Q355,79.5 357,79.5 V88.5 Q355,88.5 355,90 H341 Q341,88.5 339,88.5 Z" fill="#0c5aa6"/>
  <circle cx="348.3" cy="84" r="4.6"/>
  <circle cx="341.8" cy="84" r="1.1"/><circle cx="354.8" cy="84" r="1.1"/>
  <path d="M349.7,82 Q349.2,81.2 348.3,81.2 Q346.9,81.2 346.9,82.5 Q346.9,83.6 348.3,84 Q349.8,84.4 349.8,85.6 Q349.8,86.9 348.3,86.9 Q347.1,86.9 346.8,86 M348.3,80.2 V87.9" fill="none" stroke="#0c5aa6" stroke-width="1"/>
  <!-- Spending coins -->
  <ellipse cx="427.5" cy="90" rx="8.5" ry="4.2"/>
  <ellipse cx="429" cy="84" rx="9" ry="4.2"/>
  <ellipse cx="427.5" cy="78.2" rx="8.7" ry="4.2"/>
  <path d="M419.5,88.3 Q427.5,92 435.5,88.3" fill="none" stroke="#0c5aa6" stroke-width="1.2"/>
  <path d="M420.3,82.2 Q429,86.5 437.7,82.2" fill="none" stroke="#0c5aa6" stroke-width="1.2"/>
  <ellipse cx="427.5" cy="77.6" rx="5.6" ry="2.5" fill="#fff" stroke="#0c5aa6" stroke-width="1.3"/>
  <path d="M425,76.8 L430,78.5" stroke="#0c5aa6" stroke-width="0.9"/>
  <!-- Bookings book -->
  <rect x="500" y="75.5" width="13.8" height="18.7"/>
  <path d="M501.5,75 L502.5,74 H515.5 V93 L514,94" fill="none" stroke="#fff" stroke-width="0.9"/>
  <!-- Purchase clipboard + box -->
  <path d="M578.7,76 H591.5 V84 M585.5,92 H578.7 V76" fill="none" stroke="#fff" stroke-width="1.4"/>
  <rect x="581" y="74" width="1.3" height="3"/><rect x="587.3" y="74" width="1.3" height="3"/>
  <rect x="580.5" y="79" width="6.5" height="1"/><rect x="580.5" y="82" width="5.5" height="1"/><rect x="580.5" y="85" width="4" height="1"/><rect x="580.5" y="88" width="4" height="1"/>
  <path d="M586,84.5 L592,81.7 L598.2,84.5 V91 L592,93.8 L586,91 Z"/>
  <path d="M586,84.5 L592,87.3 L598.2,84.5 M592,87.3 V93.8 M589,83 L595,86" fill="none" stroke="#0c5aa6" stroke-width="0.9"/>
  <!-- Inventory box + magnifier -->
  <path d="M658,77.3 L665.5,73.6 L673.4,77.3 V87.5 L665.5,91.8 L658,88.2 Z"/>
  <path d="M658,77.3 L665.5,81 L673.4,77.3 M665.5,81 V91.8 M661.5,75.5 L669,79.3" fill="none" stroke="#0c5aa6" stroke-width="1"/>
  <circle cx="671.5" cy="88.2" r="4.2" fill="#0c5aa6"/>
  <circle cx="671.5" cy="88.2" r="2.8" fill="none" stroke="#fff" stroke-width="1.3"/>
  <path d="M673.5,90.3 L676.7,93.6" stroke="#fff" stroke-width="1.5"/>
  <!-- AR detail -->
  <path d="M736,81.6 Q736,80 737.6,80 H749.5 V82.4 H738.4 V93.6 H757.8 V85.5 H760.3 V94.4 Q760.3,96 758.7,96 H737.6 Q736,96 736,94.4 Z"/>
  <path d="M740.3,84.2 Q741.3,84.2 741.3,83.4 H750 M757,86.5 V91.2 Q756,91.2 756,92 H741.3 Q741.3,91.2 740.3,91.2 V84.2" fill="none" stroke="#fff" stroke-width="0.8"/>
  <circle cx="748" cy="88" r="3.8"/>
  <circle cx="742.5" cy="88" r="1"/><circle cx="753.5" cy="88" r="1"/>
  <path d="M749.2,86.2 Q748.8,85.5 748,85.5 Q746.8,85.5 746.8,86.6 Q746.8,87.6 748,87.9 Q749.3,88.3 749.3,89.3 Q749.3,90.5 748,90.5 Q747,90.5 746.7,89.7 M748,84.6 V91.4" fill="none" stroke="#0c5aa6" stroke-width="0.8"/>
  <path d="M753.6,71.6 H757 V78.2 H761 L755.3,84.6 L749.6,78.2 H753.6 Z"/>
  <!-- AP detail -->
  <path d="M816,81.6 Q816,80 817.6,80 H829.5 V82.4 H818.4 V93.6 H837.6 V86 H840 V94.4 Q840,96 838.4,96 H817.6 Q816,96 816,94.4 Z"/>
  <path d="M820.3,84.2 Q821.3,84.2 821.3,83.4 H829.5 M836.8,87 V91.2 Q835.8,91.2 835.8,92 H821.3 Q821.3,91.2 820.3,91.2 V84.2" fill="none" stroke="#fff" stroke-width="0.8"/>
  <circle cx="828" cy="88" r="3.8"/>
  <circle cx="822.5" cy="88" r="1"/><circle cx="833.5" cy="88" r="1"/>
  <path d="M829.2,86.2 Q828.8,85.5 828,85.5 Q826.8,85.5 826.8,86.6 Q826.8,87.6 828,87.9 Q829.3,88.3 829.3,89.3 Q829.3,90.5 828,90.5 Q827,90.5 826.7,89.7 M828,84.6 V91.4" fill="none" stroke="#0c5aa6" stroke-width="0.8"/>
  <path d="M835.5,71.9 L841.6,79.3 H837.6 V86.5 H833.4 V79.3 H829.4 Z"/>
  <!-- Refresh -->
  <path d="M903.6,79.4 A7.7,7.7 0 1 0 907,78.2" fill="none" stroke="#fff" stroke-width="3"/>
  <path d="M905.3,73.8 L913,78.2 L905.3,82.4 Z"/>
 </g>
</svg>
<div class="tb" style="left:286px">Sales</div>
<div class="tb" style="left:366px">Reciepts</div>
<div class="tb" style="left:446px">Spending</div>
<div class="tb" style="left:526px">Bookings</div>
<div class="tb" style="left:606px">Purchase</div>
<div class="tb" style="left:686px">Inventory</div>
<div class="tb" style="left:766px">AR Detail</div>
<div class="tb" style="left:846px">AP Detail</div>
<div class="tb" style="left:926px">Refresh</div>
<!-- chevrons -->
<svg class="a" style="left:640px;top:108px" width="20" height="20" viewBox="0 0 20 20"><path d="M3,3 L10,10 L17,3 M3,10 L10,17 L17,10" fill="none" stroke="#fff" stroke-width="2.8"/></svg>
<svg class="a" style="left:1334px;top:108px" width="20" height="20" viewBox="0 0 20 20"><path d="M3,3 L10,10 L17,3 M3,10 L10,17 L17,10" fill="none" stroke="#fff" stroke-width="2.8"/></svg>
<svg class="a" style="left:640px;top:573px" width="20" height="20" viewBox="0 0 20 20"><path d="M3,3 L10,10 L17,3 M3,10 L10,17 L17,10" fill="none" stroke="#fff" stroke-width="2.8"/></svg>
<!-- monitor icon -->
<svg class="a" style="left:1310px;top:68px" width="44" height="36" viewBox="0 0 44 36">
  <defs><linearGradient id="scr" x1="0" y1="0" x2="1" y2="1"><stop offset="0" stop-color="#2a9be8"/><stop offset="1" stop-color="#1456b8"/></linearGradient>
  <radialGradient id="grn" cx="0.4" cy="0.35" r="0.7"><stop offset="0" stop-color="#9ee07a"/><stop offset="1" stop-color="#2a8a2a"/></radialGradient></defs>
  <path d="M14,31.5 L24,31.5 L26,33.5 L12,33.5 Z" fill="#d8d8d8"/>
  <path d="M17,27 H21 V31.5 H17 Z" fill="#bbb"/>
  <path d="M4.5,3.3 H32.5 L33.5,26.5 H6.5 Z" fill="#e8eef2"/>
  <path d="M6.5,5 H31 L31.8,24.5 H8 Z" fill="url(#scr)"/>
  <path d="M8,20 Q20,12 31.5,9 L31.7,12 Q20,15 8.2,23 Z" fill="#4fb0f0" opacity="0.5"/>
  <circle cx="34.5" cy="12.8" r="6.8" fill="url(#grn)"/>
  <path d="M30.5,11.3 H34 V8.8 L38.5,12.8 L34,16.8 V14.3 H30.5 Z" fill="#fff"/>
</svg>
</div><!--/toolbar-->
<div id="workflow"><svg class="a" style="left:666px;top:600px" width="600" height="72" viewBox="666 600 600 72">
 <defs>
  <radialGradient id="gp" cx="0.4" cy="0.3" r="0.75"><stop offset="0" stop-color="#8fe070"/><stop offset="0.6" stop-color="#2ca02c"/><stop offset="1" stop-color="#1a6e1a"/></radialGradient>
  <linearGradient id="ga" x1="0" y1="0" x2="1" y2="1"><stop offset="0" stop-color="#7ed957"/><stop offset="1" stop-color="#1f8f1f"/></linearGradient>
 </defs>
 <!-- 1: cash -->
 <rect x="673" y="630" width="60.2" height="36.6" rx="6" fill="#34c563"/>
 <path d="M674,625 L683,618 L699,645 L690,651 Z" fill="#d6dccb" stroke="#6f7666" stroke-width="0.7"/>
 <path d="M676,620 L680,615 L701,641 L694,648 Z" fill="#cfd5c4" stroke="#6f7666" stroke-width="0.7"/>
 <path d="M678,616 L711,614 L712,631 L680,634 Z" fill="#dde1d2" stroke="#5f665a" stroke-width="0.8"/>
 <path d="M705,618 L720,613 L726,636 L711,641 Z" fill="#d3d8c8" stroke="#5f665a" stroke-width="0.8"/>
 <ellipse cx="689" cy="623.5" rx="3" ry="3.2" fill="#59604f"/>
 <ellipse cx="699" cy="622.5" rx="2.6" ry="3.6" fill="#3f463a"/>
 <ellipse cx="710" cy="627" rx="2.2" ry="2.2" fill="#6b7a62"/>
 <ellipse cx="717" cy="622" rx="2" ry="2.4" fill="#59604f"/>
 <path d="M681,639 L700,633 L702,641 L684,646 Z" fill="#c9cfbd" stroke="#6f7666" stroke-width="0.6"/>
 <path d="M689,651 Q697,645 706,648 Q722,646 733,652 V658 Q728,662 716,660 Q700,662 691,657 Z" fill="#f6c96a"/>
 <path d="M694,654 Q705,650 716,653 Q726,653 731,656" fill="none" stroke="#fbe2a4" stroke-width="1.5"/>
 <path d="M698,635 H715.5 V645 Q706.8,649 698,645 Z" fill="#5e5a5c"/>
 <g stroke="#8a8690" stroke-width="0.6"><path d="M698,638 Q706.8,642 715.5,638 M698,641 Q706.8,645 715.5,641"/></g>
 <ellipse cx="706.8" cy="635" rx="8.8" ry="3.6" fill="#b5b4c2" stroke="#666" stroke-width="0.5"/>
 <!-- 2: credit -->
 <rect x="842.5" y="630" width="59.2" height="36.2" rx="6" fill="#b34fbd"/>
 <path d="M850,607 H880 L891.3,618 V643 H850 Z" fill="#f3f3f3" stroke="#c8c8c8" stroke-width="0.6"/>
 <path d="M880,607 L880,618 L891.3,618 Z" fill="#d8d8d8"/>
 <rect x="854" y="612" width="3" height="1.6" fill="#333"/><rect x="862" y="612" width="14" height="2" fill="#444"/>
 <rect x="854" y="620" width="35" height="22" fill="#dfe8f4"/>
 <g stroke="#a8bedc" stroke-width="0.6"><path d="M854,623 H889 M854,626 H889 M854,629 H889 M854,632 H889 M854,635 H889 M854,638 H889 M860,620 V642 M866,620 V642 M872,620 V642 M878,620 V642 M884,620 V642"/></g>
 <ellipse cx="880" cy="633" rx="7" ry="3.5" fill="#9aa090"/>
 <path d="M847,650 L876,643 L880,660 L851,665 Z" fill="#d7dccd" stroke="#7e8474" stroke-width="0.6"/>
 <ellipse cx="860" cy="654" rx="3" ry="2.5" fill="#5a6252"/><ellipse cx="868" cy="652" rx="2" ry="2.5" fill="#5a6252"/>
 <circle cx="884.3" cy="650.8" r="13.5" fill="url(#gp)" stroke="#156015" stroke-width="0.8"/>
 <path d="M881.8,642 H886.8 V648.3 H893 V653.3 H886.8 V659.6 H881.8 V653.3 H875.5 V648.3 H881.8 Z" fill="#fff"/>
 <!-- 3: clipboard -->
 <rect x="1011" y="630.4" width="60.2" height="36.1" rx="6" fill="#ee7a2c"/>
 <rect x="1029" y="612.5" width="38.3" height="47.8" rx="1.5" fill="#1f5aa8"/>
 <rect x="1032" y="617" width="32.5" height="41" fill="#eef5fc"/>
 <path d="M1035,620 Q1036,610 1043,610 Q1047,605 1051,610 Q1058,610 1060,620 Z" fill="#9c9c9c"/>
 <path d="M1034,627 L1036.5,630 L1040,624" fill="none" stroke="#e02828" stroke-width="1.3"/>
 <path d="M1034,634 L1036.5,637 L1040,631" fill="none" stroke="#e02828" stroke-width="1.3"/>
 <rect x="1041" y="626" width="18" height="1" fill="#aab"/><rect x="1041" y="633" width="15" height="1" fill="#aab"/><rect x="1041" y="642" width="14" height="1" fill="#aab"/>
 <rect x="1026" y="637" width="18" height="12" fill="#caa676"/>
 <rect x="1024" y="635" width="22" height="4" fill="#dcbf90"/>
 <rect x="1016" y="649" width="18" height="15" fill="#d2b080"/>
 <rect x="1034" y="649" width="18" height="15" fill="#c9a674"/>
 <rect x="1016" y="649" width="36" height="2" fill="#e0c8a0"/>
 <!-- 4: warehouse -->
 <rect x="1180.5" y="630" width="60.2" height="36.5" rx="6" fill="#ab5d3a"/>
 <rect x="1186" y="614" width="46.8" height="43.8" fill="#e9ecf0" stroke="#9aa0a8" stroke-width="0.6"/>
 <rect x="1186.5" y="615" width="46" height="7" fill="#1862b8"/>
 <g fill="#7d8590"><rect x="1196" y="624" width="36" height="33"/></g>
 <g fill="#eef0f3">
  <rect x="1197.5" y="625.5" width="5" height="4"/><rect x="1204" y="625.5" width="5" height="4"/><rect x="1210.5" y="625.5" width="5" height="4"/><rect x="1217" y="625.5" width="5" height="4"/><rect x="1223.5" y="625.5" width="5" height="4"/>
  <rect x="1197.5" y="631" width="5" height="4"/><rect x="1204" y="631" width="5" height="4"/><rect x="1210.5" y="631" width="5" height="4"/><rect x="1217" y="631" width="5" height="4"/><rect x="1223.5" y="631" width="5" height="4"/>
  <rect x="1197.5" y="636.5" width="5" height="4"/><rect x="1204" y="636.5" width="5" height="4"/><rect x="1210.5" y="636.5" width="5" height="4"/><rect x="1217" y="636.5" width="5" height="4"/><rect x="1223.5" y="636.5" width="5" height="4"/>
  <rect x="1197.5" y="642" width="5" height="4"/><rect x="1204" y="642" width="5" height="4"/><rect x="1210.5" y="642" width="5" height="4"/><rect x="1217" y="642" width="5" height="4"/><rect x="1223.5" y="642" width="5" height="4"/>
  <rect x="1197.5" y="647.5" width="5" height="4"/><rect x="1204" y="647.5" width="5" height="4"/><rect x="1210.5" y="647.5" width="5" height="4"/>
 </g>
 <path d="M1181,650 Q1183,636 1198,633 V627 L1209,636 L1198,645 V639 Q1188,640 1181,650 Z" fill="url(#ga)"/>
 <path d="M1216,634 H1227 V659 H1216 Z" fill="#555"/>
 <path d="M1229,634 H1240 V659 H1229 Z" fill="#666"/>
 <rect x="1222" y="644" width="12" height="10" fill="#3a3a3a"/>
 <rect x="1218" y="636" width="3" height="20" fill="#8a8a8a"/><rect x="1231" y="636" width="3" height="20" fill="#9a9a9a"/>
</svg>
<div class="wf" style="left:746px;top:610px">Workflow for Cash<br>Receipts and<br>Accounts<br>Recievable</div>
<div class="wf" style="left:915px;top:610px">Workflow and<br>Documentation for<br>Accounts Payable<br>and Disbursments</div>
<div class="wf" style="left:1084px;top:610px">Workflow for Order<br>Entry and<br>Customer Service</div>
<div class="wf" style="left:1251px;top:610px">Workflow and<br>Documentation for<br>Warehousing and<br>Receiving</div>
</div><!--/workflow-->

</body></html>
